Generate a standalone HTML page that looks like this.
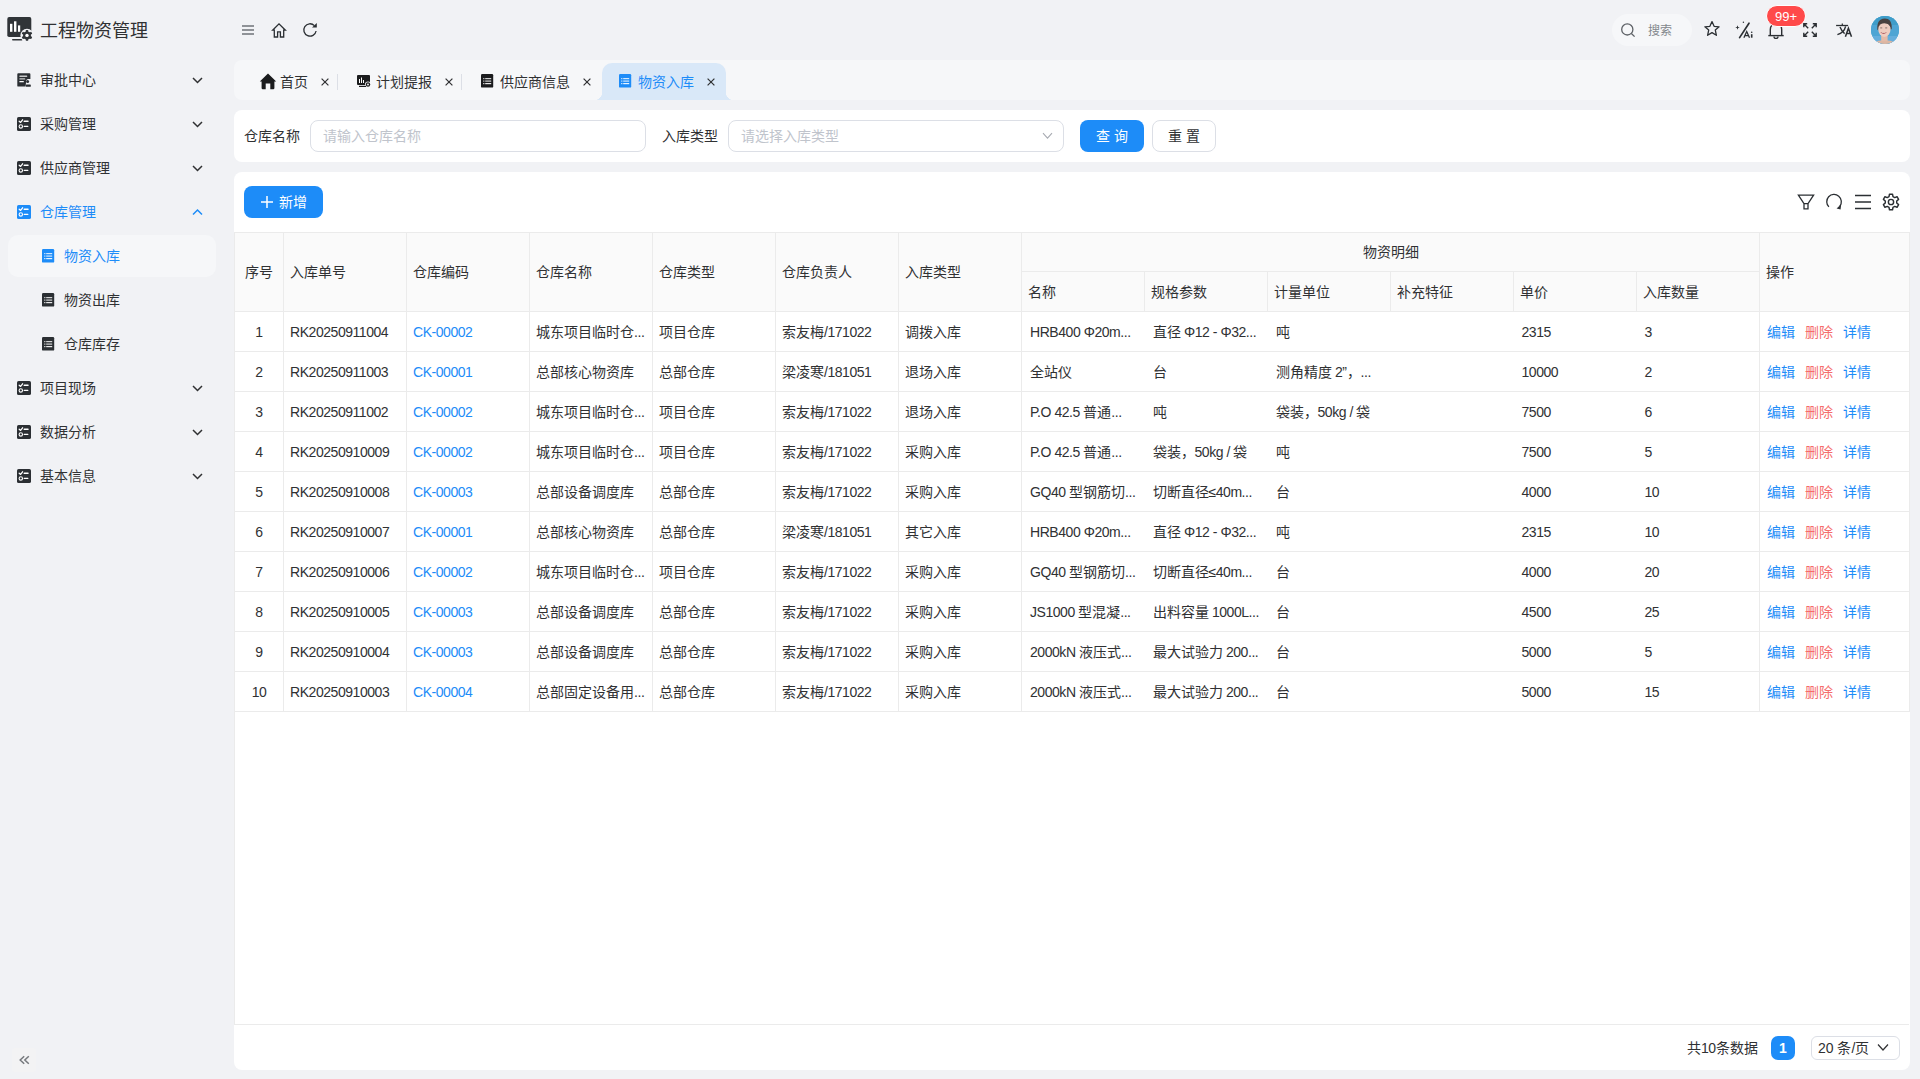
<!DOCTYPE html>
<html lang="zh-CN">
<head>
<meta charset="utf-8">
<title>工程物资管理</title>
<style>
*{box-sizing:border-box;margin:0;padding:0;}
html,body{width:1920px;height:1079px;overflow:hidden;}
body{background:#f1f2f5;font-family:"Liberation Sans",sans-serif;font-size:14px;color:#303133;position:relative;}
.abs{position:absolute;}
svg{display:block;overflow:visible;}
.brand{left:40px;top:18.5px;font-size:18px;line-height:24px;color:#303133;}
.mi{position:absolute;left:0;width:234px;height:44px;}
.mi .ic{position:absolute;left:17px;top:15px;}
.mi .tx{position:absolute;left:40px;top:0;line-height:44px;font-size:14px;color:#303133;white-space:nowrap;}
.mi .ch{position:absolute;left:192px;top:19px;}
.mi.sub .ic{left:42px;}
.mi.sub .tx{left:64px;}
.mi.act .tx{color:#1d8cf8;}
.subhl{left:8px;top:235px;width:208px;height:42px;background:#f6f7f9;border-radius:10px;}
.tabbar{left:234px;top:60px;width:1676px;height:40px;background:#f6f7f9;border-radius:8px;}
.tx14{position:absolute;font-size:14px;line-height:20px;white-space:nowrap;}
.formcard{left:234px;top:110px;width:1676px;height:52px;background:#fff;border-radius:8px;}
.tablecard{left:234px;top:172px;width:1676px;height:898px;background:#fff;border-radius:8px;}
.inp{position:absolute;top:120px;height:32px;border:1px solid #dcdfe6;border-radius:8px;background:#fff;}
.inp .ph{position:absolute;left:12px;top:0;line-height:30px;color:#c0c4cc;font-size:14px;white-space:nowrap;}
.btn{position:absolute;height:32px;border-radius:8px;text-align:center;line-height:32px;font-size:14px;white-space:nowrap;}
.btn.pri{background:#1d8cf8;color:#fff;}
.btn.def{border:1px solid #dcdfe6;color:#303133;line-height:30px;background:#fff;}
table{border-collapse:collapse;table-layout:fixed;position:absolute;left:234px;top:232px;}
th,td{border:1px solid #ebebeb;height:40px;line-height:20px;padding:0 0 0 6px;text-align:left;white-space:nowrap;overflow:hidden;font-weight:normal;}
th{background:#fafafa;color:#303133;height:auto;}
.l{font-size:14px;letter-spacing:-0.45px;}
td.s0{padding-left:8px;}td.s1,td.s2,td.s3,td.s4,td.s5{padding-left:8px;}
td.s1,td.s2,td.s3,td.s4,td.s5{border-left-style:hidden;}
td.s0,td.s1,td.s2,td.s3,td.s4{border-right-style:hidden;}
td{color:#303133;background:#fff;}
td.c,th.c{text-align:center;padding:0;}
.lk{color:#1d8cf8;}
.rd{color:#f56c6c;}
</style>
</head>
<body>
<div class="abs" style="left:7px;top:17px"><svg width="28" height="26" viewBox="0 0 28 26">
<rect x="0.3" y="0.1" width="24" height="20" rx="1.8" fill="#303438"/>
<rect x="3" y="6.8" width="2.4" height="8" fill="#fff"/>
<rect x="7" y="4.3" width="2.4" height="10.5" fill="#fff"/>
<rect x="11" y="8.4" width="2.2" height="6.4" fill="#fff"/>
<rect x="5" y="21.9" width="10.5" height="1.6" rx=".8" fill="#303438"/>
<circle cx="20" cy="18.4" r="6.6" fill="#f1f2f5"/>
<g transform="translate(20 18.4)" fill="#303438">
<circle r="3.9"/>
<rect x="-1.2" y="-5.4" width="2.4" height="10.8" rx=".5"/>
<rect x="-1.2" y="-5.4" width="2.4" height="10.8" rx=".5" transform="rotate(60)"/>
<rect x="-1.2" y="-5.4" width="2.4" height="10.8" rx=".5" transform="rotate(120)"/>
</g>
<circle cx="20" cy="18.4" r="1.7" fill="#fff"/>
</svg></div>
<div class="abs brand">工程物资管理</div>
<div class="abs subhl"></div>
<div class="mi" style="top:58px"><div class="ic" style="top:15px"><svg width="14" height="14" viewBox="0 0 14 14"><path d="M0.3 1.2 Q0.3 0.3 1.2 0.3 L12.4 0.3 Q13.4 0.3 13.4 1.2 L13.4 6 L11 6 Q9.6 6 9.2 7.6 L8.6 13.6 L1.2 13.6 Q0.3 13.6 0.3 12.7 Z" fill="#2b2f33"/>
<rect x="2.3" y="2.6" width="8" height="1.3" rx=".6" fill="#fff" opacity=".75"/>
<rect x="2.3" y="5.3" width="6" height="1.3" rx=".6" fill="#fff" opacity=".75"/>
<rect x="2.3" y="8" width="4.6" height="1.3" rx=".6" fill="#fff"/>
<circle cx="10.6" cy="8.4" r="1.5" fill="#2b2f33"/>
<rect x="8.9" y="11.4" width="4.9" height="2.4" rx=".6" fill="#2b2f33"/></svg></div><div class="tx">审批中心</div><div class="ch"><svg width="11" height="7" viewBox="0 0 11 7"><path d="M1 1 L5.5 5.5 L10 1" stroke="#303133" stroke-width="1.5" fill="none"/></svg></div></div>
<div class="mi" style="top:102px"><div class="ic" style="top:15px"><svg width="14" height="14" viewBox="0 0 14 14"><rect x="0" y="0" width="14" height="14" rx="1.6" fill="#2b2f33"/>
<path d="M2.2 4.2 L3.6 5.4 L5.6 2.8" stroke="#fff" stroke-width="1.3" fill="none" stroke-linecap="round" stroke-linejoin="round"/>
<rect x="6.6" y="3.6" width="5" height="1.3" rx=".5" fill="#fff"/>
<circle cx="3.8" cy="9.4" r="1.7" stroke="#fff" stroke-width="1.1" fill="none"/>
<rect x="6.6" y="8.8" width="4.8" height="1.3" rx=".5" fill="#fff"/></svg></div><div class="tx">采购管理</div><div class="ch"><svg width="11" height="7" viewBox="0 0 11 7"><path d="M1 1 L5.5 5.5 L10 1" stroke="#303133" stroke-width="1.5" fill="none"/></svg></div></div>
<div class="mi" style="top:146px"><div class="ic" style="top:15px"><svg width="14" height="14" viewBox="0 0 14 14"><rect x="0" y="0" width="14" height="14" rx="1.6" fill="#2b2f33"/>
<path d="M2.2 4.2 L3.6 5.4 L5.6 2.8" stroke="#fff" stroke-width="1.3" fill="none" stroke-linecap="round" stroke-linejoin="round"/>
<rect x="6.6" y="3.6" width="5" height="1.3" rx=".5" fill="#fff"/>
<circle cx="3.8" cy="9.4" r="1.7" stroke="#fff" stroke-width="1.1" fill="none"/>
<rect x="6.6" y="8.8" width="4.8" height="1.3" rx=".5" fill="#fff"/></svg></div><div class="tx">供应商管理</div><div class="ch"><svg width="11" height="7" viewBox="0 0 11 7"><path d="M1 1 L5.5 5.5 L10 1" stroke="#303133" stroke-width="1.5" fill="none"/></svg></div></div>
<div class="mi act" style="top:190px"><div class="ic" style="top:15px"><svg width="14" height="14" viewBox="0 0 14 14"><rect x="0" y="0" width="14" height="14" rx="1.6" fill="#1d8cf8"/>
<path d="M2.2 4.2 L3.6 5.4 L5.6 2.8" stroke="#fff" stroke-width="1.3" fill="none" stroke-linecap="round" stroke-linejoin="round"/>
<rect x="6.6" y="3.6" width="5" height="1.3" rx=".5" fill="#fff"/>
<circle cx="3.8" cy="9.4" r="1.7" stroke="#fff" stroke-width="1.1" fill="none"/>
<rect x="6.6" y="8.8" width="4.8" height="1.3" rx=".5" fill="#fff"/></svg></div><div class="tx">仓库管理</div><div class="ch"><svg width="11" height="7" viewBox="0 0 11 7"><path d="M1 5.5 L5.5 1 L10 5.5" stroke="#1d8cf8" stroke-width="1.5" fill="none"/></svg></div></div>
<div class="mi sub act" style="top:234px"><div class="ic" style="top:15px"><svg width="13" height="14" viewBox="0 0 13 14"><rect x="0" y="0" width="12.2" height="13.6" rx="1.2" fill="#1d8cf8"/>
<rect x="2.2" y="4" width="1.2" height="1.2" fill="#fff" opacity=".8"/><rect x="4.2" y="4" width="6" height="1.2" fill="#fff" opacity=".8"/>
<rect x="2.2" y="6.5" width="1.2" height="1.2" fill="#fff" opacity=".8"/><rect x="4.2" y="6.5" width="6" height="1.2" fill="#fff" opacity=".8"/>
<rect x="2.2" y="9" width="1.2" height="1.2" fill="#fff" opacity=".9"/><rect x="4.2" y="9" width="6" height="1.2" fill="#fff" opacity=".9"/></svg></div><div class="tx">物资入库</div></div>
<div class="mi sub" style="top:278px"><div class="ic" style="top:15px"><svg width="13" height="14" viewBox="0 0 13 14"><rect x="0" y="0" width="12.2" height="13.6" rx="1.2" fill="#2b2f33"/>
<rect x="2.2" y="4" width="1.2" height="1.2" fill="#fff" opacity=".8"/><rect x="4.2" y="4" width="6" height="1.2" fill="#fff" opacity=".8"/>
<rect x="2.2" y="6.5" width="1.2" height="1.2" fill="#fff" opacity=".8"/><rect x="4.2" y="6.5" width="6" height="1.2" fill="#fff" opacity=".8"/>
<rect x="2.2" y="9" width="1.2" height="1.2" fill="#fff" opacity=".9"/><rect x="4.2" y="9" width="6" height="1.2" fill="#fff" opacity=".9"/></svg></div><div class="tx">物资出库</div></div>
<div class="mi sub" style="top:322px"><div class="ic" style="top:15px"><svg width="13" height="14" viewBox="0 0 13 14"><rect x="0" y="0" width="12.2" height="13.6" rx="1.2" fill="#2b2f33"/>
<rect x="2.2" y="4" width="1.2" height="1.2" fill="#fff" opacity=".8"/><rect x="4.2" y="4" width="6" height="1.2" fill="#fff" opacity=".8"/>
<rect x="2.2" y="6.5" width="1.2" height="1.2" fill="#fff" opacity=".8"/><rect x="4.2" y="6.5" width="6" height="1.2" fill="#fff" opacity=".8"/>
<rect x="2.2" y="9" width="1.2" height="1.2" fill="#fff" opacity=".9"/><rect x="4.2" y="9" width="6" height="1.2" fill="#fff" opacity=".9"/></svg></div><div class="tx">仓库库存</div></div>
<div class="mi" style="top:366px"><div class="ic" style="top:15px"><svg width="14" height="14" viewBox="0 0 14 14"><rect x="0" y="0" width="14" height="14" rx="1.6" fill="#2b2f33"/>
<path d="M2.2 4.2 L3.6 5.4 L5.6 2.8" stroke="#fff" stroke-width="1.3" fill="none" stroke-linecap="round" stroke-linejoin="round"/>
<rect x="6.6" y="3.6" width="5" height="1.3" rx=".5" fill="#fff"/>
<circle cx="3.8" cy="9.4" r="1.7" stroke="#fff" stroke-width="1.1" fill="none"/>
<rect x="6.6" y="8.8" width="4.8" height="1.3" rx=".5" fill="#fff"/></svg></div><div class="tx">项目现场</div><div class="ch"><svg width="11" height="7" viewBox="0 0 11 7"><path d="M1 1 L5.5 5.5 L10 1" stroke="#303133" stroke-width="1.5" fill="none"/></svg></div></div>
<div class="mi" style="top:410px"><div class="ic" style="top:15px"><svg width="14" height="14" viewBox="0 0 14 14"><rect x="0" y="0" width="14" height="14" rx="1.6" fill="#2b2f33"/>
<path d="M2.2 4.2 L3.6 5.4 L5.6 2.8" stroke="#fff" stroke-width="1.3" fill="none" stroke-linecap="round" stroke-linejoin="round"/>
<rect x="6.6" y="3.6" width="5" height="1.3" rx=".5" fill="#fff"/>
<circle cx="3.8" cy="9.4" r="1.7" stroke="#fff" stroke-width="1.1" fill="none"/>
<rect x="6.6" y="8.8" width="4.8" height="1.3" rx=".5" fill="#fff"/></svg></div><div class="tx">数据分析</div><div class="ch"><svg width="11" height="7" viewBox="0 0 11 7"><path d="M1 1 L5.5 5.5 L10 1" stroke="#303133" stroke-width="1.5" fill="none"/></svg></div></div>
<div class="mi" style="top:454px"><div class="ic" style="top:15px"><svg width="14" height="14" viewBox="0 0 14 14"><rect x="0" y="0" width="14" height="14" rx="1.6" fill="#2b2f33"/>
<path d="M2.2 4.2 L3.6 5.4 L5.6 2.8" stroke="#fff" stroke-width="1.3" fill="none" stroke-linecap="round" stroke-linejoin="round"/>
<rect x="6.6" y="3.6" width="5" height="1.3" rx=".5" fill="#fff"/>
<circle cx="3.8" cy="9.4" r="1.7" stroke="#fff" stroke-width="1.1" fill="none"/>
<rect x="6.6" y="8.8" width="4.8" height="1.3" rx=".5" fill="#fff"/></svg></div><div class="tx">基本信息</div><div class="ch"><svg width="11" height="7" viewBox="0 0 11 7"><path d="M1 1 L5.5 5.5 L10 1" stroke="#303133" stroke-width="1.5" fill="none"/></svg></div></div>
<div class="abs" style="left:12px;top:1048px;width:24px;height:24px;background:#f3f3f4;border-radius:3px">
<svg width="24" height="24" viewBox="0 0 24 24"><path d="M12.2 8.2 L8.2 12 L12.2 15.8 M16.8 8.2 L12.8 12 L16.8 15.8" stroke="#76797d" stroke-width="1.5" fill="none"/></svg></div>
<div class="abs" style="left:242px;top:25px"><svg width="12" height="10" viewBox="0 0 12 10"><rect x="0" y="0.2" width="12" height="1.6" fill="#777b80"/><rect x="0" y="4.2" width="12" height="1.6" fill="#777b80"/><rect x="0" y="8.2" width="12" height="1.6" fill="#777b80"/></svg></div>
<div class="abs" style="left:271px;top:22px"><svg width="16" height="16" viewBox="0 0 16 16"><path d="M1.6 8.2 L8 1.8 L14.4 8.2 L12.7 8.2 L12.7 15 L9.4 15 L9.4 9.8 L6.6 9.8 L6.6 15 L3.3 15 L3.3 8.2 Z" stroke="#2b2f33" stroke-width="1.3" fill="none" stroke-linejoin="miter"/></svg></div>
<div class="abs" style="left:302px;top:22px"><svg width="16" height="16" viewBox="0 0 16 16"><path d="M14.1 9 A6.2 6.2 0 1 1 12.4 3.6" stroke="#2b2f33" stroke-width="1.3" fill="none"/><path d="M10 5.6 L14.8 5.6 L14.8 1 Z" fill="#2b2f33"/></svg></div>
<div class="abs" style="left:1612px;top:14px;width:80px;height:32px;border-radius:16px;background:#f6f7f9"></div>
<div class="abs" style="left:1620px;top:22px"><svg width="16" height="16" viewBox="0 0 16 16"><circle cx="7.3" cy="7.4" r="5.6" stroke="#5d6166" stroke-width="1.3" fill="none"/><path d="M11.4 11.5 L14.6 14.6" stroke="#5d6166" stroke-width="1.3"/></svg></div>
<div class="abs" style="left:1648px;top:21px;font-size:12px;line-height:20px;color:#83878c">搜索</div>
<div class="abs" style="left:1703px;top:20px"><svg width="18" height="18" viewBox="0 0 18 18"><path d="M9 1.6 L11.1 6.3 L16.1 6.8 L12.3 10.1 L13.4 15.3 L9 12.6 L4.6 15.3 L5.7 10.1 L1.9 6.8 L6.9 6.3 Z" stroke="#2b2f33" stroke-width="1.3" fill="none" stroke-linejoin="round"/></svg></div>
<div class="abs" style="left:1734px;top:20px"><svg width="20" height="20" viewBox="0 0 20 20"><path d="M3.5 5.2 L4.1 6.9 L5.8 7.5 L4.1 8.1 L3.5 9.8 L2.9 8.1 L1.2 7.5 L2.9 6.9 Z" fill="#2b2f33"/><circle cx="9.4" cy="2.3" r=".7" fill="#2b2f33"/><path d="M15 3.2 L5.6 17.6" stroke="#2b2f33" stroke-width="1.7" stroke-linecap="round"/><path d="M9.9 17.7 L12.7 11.5 L15.5 17.7 M11 15.6 L14.5 15.6" stroke="#2b2f33" stroke-width="1.3" fill="none"/><rect x="16.9" y="14.2" width="1.6" height="3.5" fill="#2b2f33"/><circle cx="17.7" cy="12.3" r=".8" fill="#2b2f33"/></svg></div>
<div class="abs" style="left:1767px;top:22px"><svg width="18" height="18" viewBox="0 0 18 18"><path d="M3.3 13.2 L3.3 7.4 A5.7 5.7 0 0 1 14.7 7.4 L14.7 13.2" stroke="#2b2f33" stroke-width="1.4" fill="none"/><path d="M1.3 13.6 L16.7 13.6" stroke="#2b2f33" stroke-width="1.4"/><path d="M7 14.4 A2 2 0 0 0 11 14.4" stroke="#2b2f33" stroke-width="1.3" fill="none"/></svg></div>
<div class="abs" style="left:1766px;top:5px;width:40px;height:22px;border-radius:11px;background:#ff4a4a;border:1px solid #fff;color:#fff;font-size:13px;line-height:21px;text-align:center">99+</div>
<div class="abs" style="left:1802px;top:22px"><svg width="16" height="16" viewBox="0 0 16 16"><g stroke="#2b2f33" stroke-width="1.4" fill="none"><path d="M1.8 5.2 L1.8 1.8 L5.2 1.8 M1.8 1.8 L6.2 6.2"/><path d="M10.8 1.8 L14.2 1.8 L14.2 5.2 M14.2 1.8 L9.8 6.2"/><path d="M1.8 10.8 L1.8 14.2 L5.2 14.2 M1.8 14.2 L6.2 9.8"/><path d="M14.2 10.8 L14.2 14.2 L10.8 14.2 M14.2 14.2 L9.8 9.8"/></g></svg></div>
<div class="abs" style="left:1835px;top:22px"><svg width="18" height="16" viewBox="0 0 18 16"><g stroke="#2b2f33" fill="none"><path d="M1.1 3.5 L13.1 3.5" stroke-width="1.3"/><path d="M7.3 1.6 L7.3 3.2" stroke-width="1.2"/><path d="M10.6 4.3 Q9.2 10.6 2.4 12.6" stroke-width="1.4"/><path d="M5 5.1 Q6.8 9.6 9.6 11.6" stroke-width="1.4"/><path d="M10.4 14.8 L13.4 6.2 L16.5 14.8 M11.4 11.6 L15.5 11.6" stroke-width="1.5"/></g></svg></div>
<div class="abs" style="left:1871px;top:16px;width:28px;height:28px;border-radius:14px;overflow:hidden;background:#4aa3d2">
<svg width="28" height="28" viewBox="0 0 28 28"><rect width="28" height="28" fill="#4ea5d4"/><rect width="28" height="9" fill="#3f9dc9"/><rect y="20" width="28" height="8" fill="#66aedc"/>
<path d="M2 29 Q4 25 10 24.6 L17 24.6 Q23 25 26 29 Z" fill="#dcb6a2"/>
<rect x="10.2" y="18.5" width="6.4" height="6.8" fill="#e4bba8"/>
<path d="M6.3 13.5 Q5.8 6 9.5 3.8 Q13 1.6 16.8 3 Q21 4.8 20.8 12.5 L19.8 14 Q19.2 7.2 13.5 6.4 Q8.2 6.8 7.4 14.5 Z" fill="#4a4240"/>
<ellipse cx="13.4" cy="13.6" rx="6.1" ry="7.4" fill="#efcdc0"/>
<path d="M7.4 10.5 Q8.4 5.6 13.4 5.4 Q18.6 5.6 19.6 10.5 Q17.2 7.4 13.4 7.3 Q9.6 7.4 7.4 10.5 Z" fill="#4a4240"/>
<rect x="9.2" y="11.4" width="2" height="1" fill="#8a746e"/><rect x="14.2" y="11.4" width="2" height="1" fill="#8a746e"/>
<path d="M9.4 16 Q12.6 19.8 15.8 16 Z" fill="#b25b62"/><path d="M10.4 16.2 L14.8 16.2 L14.4 17.1 L10.8 17.1 Z" fill="#f4ead8"/>
</svg></div>
<div class="abs tabbar"></div>
<div class="abs" style="left:602px;top:63px;width:124px;height:37px;background:#d9e8f8;border-radius:10px 10px 0 0"></div>
<div class="abs" style="left:594px;top:92px;width:8px;height:8px;background:radial-gradient(circle at 0 0,#f6f7f9 8px,#d9e8f8 8.5px)"></div>
<div class="abs" style="left:726px;top:92px;width:8px;height:8px;background:radial-gradient(circle at 100% 0,#f6f7f9 8px,#d9e8f8 8.5px)"></div>
<div class="abs" style="left:259px;top:73px"><svg width="18" height="17" viewBox="0 0 18 17"><path d="M9 0.6 L17.2 8.4 L15.4 8.4 L15.4 15 Q15.4 16.2 14.2 16.2 L11.3 16.2 L11.3 10.6 L6.7 10.6 L6.7 16.2 L3.8 16.2 Q2.6 16.2 2.6 15 L2.6 8.4 L0.8 8.4 Z" fill="#1b1c1e"/></svg></div>
<div class="tx14" style="left:280px;top:72px;color:#303133">首页</div>
<div class="abs" style="left:320px;top:77px"><svg width="10" height="10" viewBox="0 0 10 10"><path d="M1.6 1.6 L8.4 8.4 M8.4 1.6 L1.6 8.4" stroke="#303133" stroke-width="1.2"/></svg></div>
<div class="abs" style="left:337px;top:74px;width:1px;height:16px;background:#dcdfe6"></div>
<div class="abs" style="left:357px;top:75px"><svg width="14" height="12" viewBox="0 0 14 12"><rect x="0" y="0" width="13" height="10" rx="1" fill="#1b1c1e"/><rect x="2" y="4" width="1" height="4" fill="#fff"/><rect x="4" y="2.5" width="1" height="5.5" fill="#fff"/><rect x="6" y="5" width="1" height="3" fill="#fff"/><circle cx="11" cy="9.5" r="3" fill="#f6f7f9"/><circle cx="11" cy="9.5" r="2.2" fill="#1b1c1e"/><circle cx="11" cy="9.5" r=".9" fill="#fff"/><rect x="2" y="10.8" width="7" height="1.2" fill="#1b1c1e"/></svg></div>
<div class="tx14" style="left:376px;top:72px;color:#303133">计划提报</div>
<div class="abs" style="left:444px;top:77px"><svg width="10" height="10" viewBox="0 0 10 10"><path d="M1.6 1.6 L8.4 8.4 M8.4 1.6 L1.6 8.4" stroke="#303133" stroke-width="1.2"/></svg></div>
<div class="abs" style="left:461px;top:74px;width:1px;height:16px;background:#dcdfe6"></div>
<div class="abs" style="left:481px;top:74px"><svg width="13" height="14" viewBox="0 0 13 14"><rect x="0" y="0" width="12.2" height="13.6" rx="1.2" fill="#1b1c1e"/>
<rect x="2.2" y="4" width="1.2" height="1.2" fill="#fff" opacity=".8"/><rect x="4.2" y="4" width="6" height="1.2" fill="#fff" opacity=".8"/>
<rect x="2.2" y="6.5" width="1.2" height="1.2" fill="#fff" opacity=".8"/><rect x="4.2" y="6.5" width="6" height="1.2" fill="#fff" opacity=".8"/>
<rect x="2.2" y="9" width="1.2" height="1.2" fill="#fff" opacity=".9"/><rect x="4.2" y="9" width="6" height="1.2" fill="#fff" opacity=".9"/></svg></div>
<div class="tx14" style="left:500px;top:72px;color:#303133">供应商信息</div>
<div class="abs" style="left:582px;top:77px"><svg width="10" height="10" viewBox="0 0 10 10"><path d="M1.6 1.6 L8.4 8.4 M8.4 1.6 L1.6 8.4" stroke="#303133" stroke-width="1.2"/></svg></div>
<div class="abs" style="left:619px;top:74px"><svg width="13" height="14" viewBox="0 0 13 14"><rect x="0" y="0" width="12.2" height="13.6" rx="1.2" fill="#1d8cf8"/>
<rect x="2.2" y="4" width="1.2" height="1.2" fill="#fff" opacity=".8"/><rect x="4.2" y="4" width="6" height="1.2" fill="#fff" opacity=".8"/>
<rect x="2.2" y="6.5" width="1.2" height="1.2" fill="#fff" opacity=".8"/><rect x="4.2" y="6.5" width="6" height="1.2" fill="#fff" opacity=".8"/>
<rect x="2.2" y="9" width="1.2" height="1.2" fill="#fff" opacity=".9"/><rect x="4.2" y="9" width="6" height="1.2" fill="#fff" opacity=".9"/></svg></div>
<div class="tx14" style="left:638px;top:72px;color:#1d8cf8">物资入库</div>
<div class="abs" style="left:706px;top:77px"><svg width="10" height="10" viewBox="0 0 10 10"><path d="M1.6 1.6 L8.4 8.4 M8.4 1.6 L1.6 8.4" stroke="#303133" stroke-width="1.2"/></svg></div>
<div class="abs formcard"></div>
<div class="tx14" style="left:244px;top:126px">仓库名称</div>
<div class="inp" style="left:310px;width:336px"><div class="ph">请输入仓库名称</div></div>
<div class="tx14" style="left:662px;top:126px">入库类型</div>
<div class="inp" style="left:728px;width:336px"><div class="ph">请选择入库类型</div><div class="abs" style="left:313px;top:11px"><svg width="11" height="8" viewBox="0 0 11 8"><path d="M1 1.2 L5.5 6.2 L10 1.2" stroke="#a8abb2" stroke-width="1.1" fill="none"/></svg></div></div>
<div class="btn pri" style="left:1080px;top:120px;width:64px">查 询</div>
<div class="btn def" style="left:1152px;top:120px;width:64px">重 置</div>
<div class="abs tablecard"></div>
<div class="btn pri" style="left:244px;top:186px;width:79px"><span style="position:absolute;left:16px;top:9px"><svg width="14" height="14" viewBox="0 0 14 14"><path d="M7 1 L7 13 M1 7 L13 7" stroke="#fff" stroke-width="1.5"/></svg></span><span style="position:absolute;left:35px;top:0">新增</span></div>
<div class="abs" style="left:1797px;top:193px"><svg width="18" height="18" viewBox="0 0 18 18"><path d="M1.4 2.2 L16.6 2.2 L11 10.6 L11 15.9 L7 15.9 L7 10.6 Z M7 10.6 L11 10.6" stroke="#2b2f33" stroke-width="1.3" fill="none" stroke-linejoin="miter"/></svg></div>
<div class="abs" style="left:1825px;top:193px"><svg width="18" height="18" viewBox="0 0 18 18"><path d="M3.9 13.9 A7.3 7.3 0 1 1 14.8 13.2" stroke="#2b2f33" stroke-width="1.3" fill="none"/><path d="M16.2 11.2 L15.6 16.4 L11.6 15.6 Z" fill="#2b2f33"/></svg></div>
<div class="abs" style="left:1854px;top:193px"><svg width="18" height="18" viewBox="0 0 18 18"><path d="M1 2.6 L17 2.6 M1 9 L17 9 M1 15.4 L17 15.4" stroke="#2b2f33" stroke-width="1.5"/></svg></div>
<div class="abs" style="left:1882px;top:193px"><svg width="18" height="18" viewBox="0 0 18 18"><g transform="translate(9 9) scale(1.1) translate(-9 -9)"><path d="M7.6 0.9 L10.4 0.9 L10.8 3.1 L12.4 4 L14.5 3.2 L15.9 5.6 L14.2 7.1 L14.2 8.9 L15.9 10.4 L14.5 12.8 L12.4 12 L10.8 12.9 L10.4 15.1 L7.6 15.1 L7.2 12.9 L5.6 12 L3.5 12.8 L2.1 10.4 L3.8 8.9 L3.8 7.1 L2.1 5.6 L3.5 3.2 L5.6 4 L7.2 3.1 Z" transform="translate(0 1)" stroke="#2b2f33" stroke-width="1.3" fill="none" stroke-linejoin="round"/><circle cx="9" cy="9" r="2.4" stroke="#2b2f33" stroke-width="1.3" fill="none"/></g></svg></div>
<table><colgroup><col style="width:49px"><col style="width:123px"><col style="width:123px"><col style="width:123px"><col style="width:123px"><col style="width:123px"><col style="width:123px"><col style="width:123px"><col style="width:123px"><col style="width:123px"><col style="width:123px"><col style="width:123px"><col style="width:123px"><col style="width:150px"></colgroup><tr style="height:39px"><th class="c" rowspan="2">序号</th><th rowspan="2">入库单号</th><th rowspan="2">仓库编码</th><th rowspan="2">仓库名称</th><th rowspan="2">仓库类型</th><th rowspan="2">仓库负责人</th><th rowspan="2">入库类型</th><th class="c" colspan="6">物资明细</th><th rowspan="2">操作</th></tr><tr style="height:40px"><th>名称</th><th>规格参数</th><th>计量单位</th><th>补充特征</th><th>单价</th><th>入库数量</th></tr><tr style="height:40px"><td class="c"><span class="l">1</span></td><td><span class="l">RK20250911004</span></td><td class="lk"><span class="l">CK-00002</span></td><td>城东项目临时仓<span class="l">...</span></td><td>项目仓库</td><td>索友梅<span class="l">/171022</span></td><td>调拨入库</td><td class="s0"><span class="l">HRB400 Φ20m...</span></td><td class="s1">直径<span class="l"> Φ12 - Φ32...</span></td><td class="s2">吨</td><td class="s3"></td><td class="s4"><span class="l">2315</span></td><td class="s5"><span class="l">3</span></td><td style="padding-left:7px"><span class="lk">编辑</span><span class="rd" style="margin-left:10px">删除</span><span class="lk" style="margin-left:10px">详情</span></td></tr><tr style="height:40px"><td class="c"><span class="l">2</span></td><td><span class="l">RK20250911003</span></td><td class="lk"><span class="l">CK-00001</span></td><td>总部核心物资库</td><td>总部仓库</td><td>梁凌寒<span class="l">/181051</span></td><td>退场入库</td><td class="s0">全站仪</td><td class="s1">台</td><td class="s2">测角精度<span class="l"> 2”</span>，<span class="l">...</span></td><td class="s3"></td><td class="s4"><span class="l">10000</span></td><td class="s5"><span class="l">2</span></td><td style="padding-left:7px"><span class="lk">编辑</span><span class="rd" style="margin-left:10px">删除</span><span class="lk" style="margin-left:10px">详情</span></td></tr><tr style="height:40px"><td class="c"><span class="l">3</span></td><td><span class="l">RK20250911002</span></td><td class="lk"><span class="l">CK-00002</span></td><td>城东项目临时仓<span class="l">...</span></td><td>项目仓库</td><td>索友梅<span class="l">/171022</span></td><td>退场入库</td><td class="s0"><span class="l">P.O 42.5 </span>普通<span class="l">...</span></td><td class="s1">吨</td><td class="s2">袋装，<span class="l">50kg / </span>袋</td><td class="s3"></td><td class="s4"><span class="l">7500</span></td><td class="s5"><span class="l">6</span></td><td style="padding-left:7px"><span class="lk">编辑</span><span class="rd" style="margin-left:10px">删除</span><span class="lk" style="margin-left:10px">详情</span></td></tr><tr style="height:40px"><td class="c"><span class="l">4</span></td><td><span class="l">RK20250910009</span></td><td class="lk"><span class="l">CK-00002</span></td><td>城东项目临时仓<span class="l">...</span></td><td>项目仓库</td><td>索友梅<span class="l">/171022</span></td><td>采购入库</td><td class="s0"><span class="l">P.O 42.5 </span>普通<span class="l">...</span></td><td class="s1">袋装，<span class="l">50kg / </span>袋</td><td class="s2">吨</td><td class="s3"></td><td class="s4"><span class="l">7500</span></td><td class="s5"><span class="l">5</span></td><td style="padding-left:7px"><span class="lk">编辑</span><span class="rd" style="margin-left:10px">删除</span><span class="lk" style="margin-left:10px">详情</span></td></tr><tr style="height:40px"><td class="c"><span class="l">5</span></td><td><span class="l">RK20250910008</span></td><td class="lk"><span class="l">CK-00003</span></td><td>总部设备调度库</td><td>总部仓库</td><td>索友梅<span class="l">/171022</span></td><td>采购入库</td><td class="s0"><span class="l">GQ40 </span>型钢筋切<span class="l">...</span></td><td class="s1">切断直径<span class="l">≤40m...</span></td><td class="s2">台</td><td class="s3"></td><td class="s4"><span class="l">4000</span></td><td class="s5"><span class="l">10</span></td><td style="padding-left:7px"><span class="lk">编辑</span><span class="rd" style="margin-left:10px">删除</span><span class="lk" style="margin-left:10px">详情</span></td></tr><tr style="height:40px"><td class="c"><span class="l">6</span></td><td><span class="l">RK20250910007</span></td><td class="lk"><span class="l">CK-00001</span></td><td>总部核心物资库</td><td>总部仓库</td><td>梁凌寒<span class="l">/181051</span></td><td>其它入库</td><td class="s0"><span class="l">HRB400 Φ20m...</span></td><td class="s1">直径<span class="l"> Φ12 - Φ32...</span></td><td class="s2">吨</td><td class="s3"></td><td class="s4"><span class="l">2315</span></td><td class="s5"><span class="l">10</span></td><td style="padding-left:7px"><span class="lk">编辑</span><span class="rd" style="margin-left:10px">删除</span><span class="lk" style="margin-left:10px">详情</span></td></tr><tr style="height:40px"><td class="c"><span class="l">7</span></td><td><span class="l">RK20250910006</span></td><td class="lk"><span class="l">CK-00002</span></td><td>城东项目临时仓<span class="l">...</span></td><td>项目仓库</td><td>索友梅<span class="l">/171022</span></td><td>采购入库</td><td class="s0"><span class="l">GQ40 </span>型钢筋切<span class="l">...</span></td><td class="s1">切断直径<span class="l">≤40m...</span></td><td class="s2">台</td><td class="s3"></td><td class="s4"><span class="l">4000</span></td><td class="s5"><span class="l">20</span></td><td style="padding-left:7px"><span class="lk">编辑</span><span class="rd" style="margin-left:10px">删除</span><span class="lk" style="margin-left:10px">详情</span></td></tr><tr style="height:40px"><td class="c"><span class="l">8</span></td><td><span class="l">RK20250910005</span></td><td class="lk"><span class="l">CK-00003</span></td><td>总部设备调度库</td><td>总部仓库</td><td>索友梅<span class="l">/171022</span></td><td>采购入库</td><td class="s0"><span class="l">JS1000 </span>型混凝<span class="l">...</span></td><td class="s1">出料容量<span class="l"> 1000L...</span></td><td class="s2">台</td><td class="s3"></td><td class="s4"><span class="l">4500</span></td><td class="s5"><span class="l">25</span></td><td style="padding-left:7px"><span class="lk">编辑</span><span class="rd" style="margin-left:10px">删除</span><span class="lk" style="margin-left:10px">详情</span></td></tr><tr style="height:40px"><td class="c"><span class="l">9</span></td><td><span class="l">RK20250910004</span></td><td class="lk"><span class="l">CK-00003</span></td><td>总部设备调度库</td><td>总部仓库</td><td>索友梅<span class="l">/171022</span></td><td>采购入库</td><td class="s0"><span class="l">2000kN </span>液压式<span class="l">...</span></td><td class="s1">最大试验力<span class="l"> 200...</span></td><td class="s2">台</td><td class="s3"></td><td class="s4"><span class="l">5000</span></td><td class="s5"><span class="l">5</span></td><td style="padding-left:7px"><span class="lk">编辑</span><span class="rd" style="margin-left:10px">删除</span><span class="lk" style="margin-left:10px">详情</span></td></tr><tr style="height:40px"><td class="c"><span class="l">10</span></td><td><span class="l">RK20250910003</span></td><td class="lk"><span class="l">CK-00004</span></td><td>总部固定设备用<span class="l">...</span></td><td>总部仓库</td><td>索友梅<span class="l">/171022</span></td><td>采购入库</td><td class="s0"><span class="l">2000kN </span>液压式<span class="l">...</span></td><td class="s1">最大试验力<span class="l"> 200...</span></td><td class="s2">台</td><td class="s3"></td><td class="s4"><span class="l">5000</span></td><td class="s5"><span class="l">15</span></td><td style="padding-left:7px"><span class="lk">编辑</span><span class="rd" style="margin-left:10px">删除</span><span class="lk" style="margin-left:10px">详情</span></td></tr></table>
<div class="abs" style="left:234px;top:711px;width:1px;height:313px;background:#ebebeb"></div>
<div class="abs" style="left:234px;top:1024px;width:1675px;height:1px;background:#ebebeb"></div>
<div class="tx14" style="left:1687px;top:1038px">共<span class="l">10</span>条数据</div>
<div class="abs" style="left:1771px;top:1036px;width:24px;height:24px;border-radius:7px;background:#1d8cf8;color:#fff;font-size:14px;font-weight:bold;line-height:24px;text-align:center">1</div>
<div class="abs" style="left:1811px;top:1036px;width:89px;height:24px;border-radius:6px;border:1px solid #dcdfe6"></div>
<div class="tx14" style="left:1818px;top:1038px">20 条/页</div>
<div class="abs" style="left:1877px;top:1043px"><svg width="12" height="9" viewBox="0 0 12 9"><path d="M1 1.5 L6 7 L11 1.5" stroke="#303133" stroke-width="1.2" fill="none"/></svg></div>
</body>
</html>
